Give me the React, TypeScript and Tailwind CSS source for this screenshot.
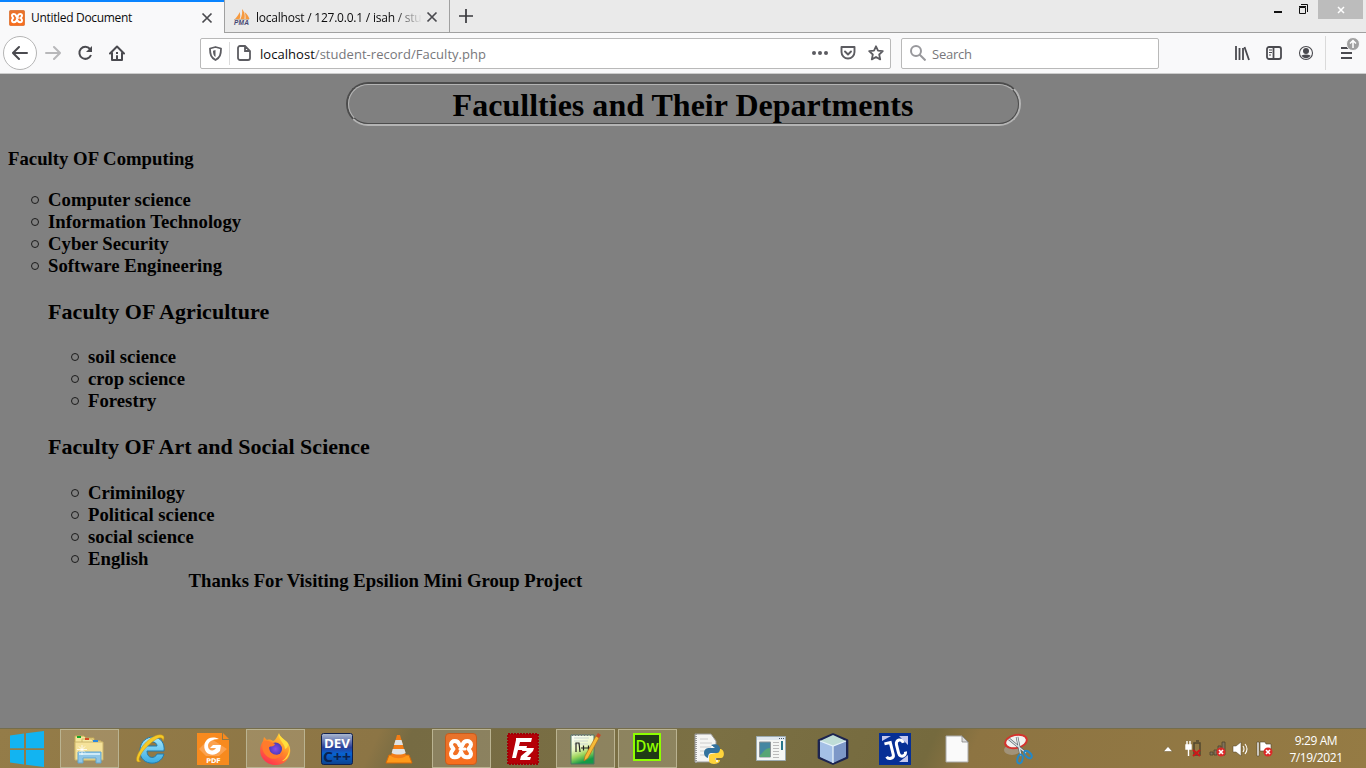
import React from "react";

type P = { children?: React.ReactNode };

const Cell = ({ children, active = false }: P & { active?: boolean }) => (
  <div className="flex h-[40px] w-[62px] shrink-0 items-center justify-center">
    <div
      className={
        active
          ? "flex h-[39px] w-[59px] items-center justify-center border border-[#bab391] bg-white/15"
          : "flex h-[39px] w-[59px] items-center justify-center"
      }
    >
      {children}
    </div>
  </div>
);

const Xampp = ({ size }: { size: number }) => (
  <svg width={size} height={size} viewBox="0 0 32 32">
    <defs>
      <linearGradient id="xa" x1="0" y1="0" x2="0" y2="1">
        <stop offset="0" stopColor="#e8732c" />
        <stop offset="1" stopColor="#f96d1c" />
      </linearGradient>
    </defs>
    <rect x="0.5" y="0.5" width="31" height="31" rx="3.5" fill="url(#xa)" stroke="#c65c1d" />
    <g fill="none" stroke="#fff" strokeWidth="4" strokeLinecap="round" strokeLinejoin="round">
      <path d="M14.500 12C13 6.500 6 7 6 11.500c0 2 1.500 3 2.500 4.500-1 1.500-2.500 2.500-2.500 4.500 0 5 7 5 9 .5l1-2" />
      <path d="M17.500 12C19 6.500 26 7 26 11.500c0 2-1.500 3-2.500 4.500 1 1.500 2.500 2.500 2.500 4.500 0 5-7 5-9 .5l-1-2" />
      <path d="M14.500 12.500L16 14l1.500-1.500M15 16h5" strokeWidth="3.200" />
    </g>
  </svg>
);

const Close = () => (
  <svg width="12" height="12" viewBox="0 0 12 12">
    <path d="M1.500 1.500l9 9M10.500 1.500l-9 9" stroke="#4a4a4f" strokeWidth="1.700" />
  </svg>
);

const Pma = () => (
  <svg width="18" height="16" viewBox="0 0 18 16">
    <path d="M2 10C4 8 6 5 6.500 3c1 3 1 5 0 7zM7.500 10C9 7 9.500 3 9 0c3 3 3 7 2.500 10zM12.500 10c0-3 0-5-1-7 3 2 4 5 5 7z" fill="#f79a3e" />
    <path d="M1 10.500h15" stroke="#c9b9a5" strokeWidth="1" />
    <text x="1" y="16" fontSize="6.500" fontWeight="bold" fontStyle="italic" fontFamily="Liberation Sans" fill="#454772" textLength="15">PMA</text>
  </svg>
);

const Explorer = () => (
  <svg width="32" height="30" viewBox="0 0 32 30">
    <path d="M2 2h9l2 2h8v20H2z" fill="#f5e59b" stroke="#c5aa56" />
    <path d="M4 2h4v2H4z" fill="#16a52a" />
    <path d="M9 5h10l1 2h8v19H9z" fill="#f7e9a4" stroke="#d0b765" />
    <path d="M12 4h4v2h-4z" fill="#d64c25" />
    <path d="M2 8h28v18H2z" fill="#f5e29a" stroke="#cbb46a" />
    <path d="M20 6h5v2h-5z" fill="#2b88dc" />
    <path d="M5 29V18h23v11h-5v-5H10v5z" fill="#8fc6e6" stroke="#62a5ce" />
    <path d="M6 19h21v2H6z" fill="#cdeaf8" />
    <path d="M9 11v10M4 15.500h10M6 12.500l6 6M12 12.500l-6 6" stroke="#fff" strokeWidth=".8" />
  </svg>
);

const IE = () => (
  <svg width="32" height="32" viewBox="0 0 32 32">
    <defs><linearGradient id="ie" x1="0" y1="0" x2="0" y2="1"><stop offset="0" stopColor="#a5e8ff" /><stop offset="1" stopColor="#3aabe2" /></linearGradient></defs>
    <path d="M29 18H12c0 8 8 8 10 3h7c-2 7-8 10-14 9C8 29 4 23 5 16 6 8 12 4 18 4c8 0 12 7 11 14zM12 13h10c0-5-9-6-10 0z" fill="url(#ie)" stroke="#217bae" />
    <path d="M6 28c-5 3-6-2-2-9C9 9 20 0 27 2c3 1 2 4 1 6 0-4-4-4-8-1C12 12 5 21 4 26c0 2 1 2 2 2z" fill="#f5ca26" stroke="#c28e16" strokeWidth=".5" />
  </svg>
);

const Foxit = () => (
  <svg width="32" height="32" viewBox="0 0 32 32">
    <path d="M0 0h25v7h7v25H0z" fill="#f78a1e" />
    <path d="M26 0l6 6h-6z" fill="#f78a1e" />
    <path d="M2 16L13 5l17 11-8 7H9z" fill="#fba14e" />
    <path d="M22 6C12 1 5 9 8 17c2 6 11 6 15 1l1-6h-8l-3 3h6c-2 4-8 3-8-2 0-4 4-7 11-7z" fill="#fff" />
    <text x="16.500" y="29.500" fontSize="6.500" textAnchor="middle" fontWeight="bold" fontFamily="DejaVu Sans" fill="#fff">PDF</text>
  </svg>
);

const Firefox = () => (
  <svg width="32" height="32" viewBox="0 0 32 32">
    <defs>
      <linearGradient id="fx" x1=".8" y1="0" x2=".2" y2="1"><stop stopColor="#ffe13b" /><stop offset=".45" stopColor="#ff8b28" /><stop offset="1" stopColor="#ff2855" /></linearGradient>
      <radialGradient id="fp"><stop stopColor="#8a4de8" /><stop offset="1" stopColor="#493bb7" /></radialGradient>
    </defs>
    <path d="M20 0c1 4 5 6 8 9 5 6 4 14-1 19-6 6-17 5-22-1C0 22 0 14 4 8l1-4 3 3c2-1 5 0 6 1 2 0 4-4 6-8z" fill="url(#fx)" />
    <circle cx="16.500" cy="16" r="6.500" fill="url(#fp)" />
    <path d="M5 8c4-1 7 1 11 3-1 3-4 2-6 3 0 8 9 10 14 5-1 6-9 9-15 5C3 20 2 13 5 8z" fill="#ff7b2c" />
    <path d="M20 1c-1 6 6 9 6 15 3-1 3-4 3-5 3 7-1 14-6 17 8-1 10-13 5-19-3-3-7-5-8-8z" fill="#ffdf3d" />
  </svg>
);

const Dev = () => (
  <svg width="32" height="32" viewBox="0 0 32 32">
    <defs><linearGradient id="dv" x1="0" y1="0" x2="0" y2="1"><stop stopColor="#aebbd1" /><stop offset=".45" stopColor="#2a3f98" /><stop offset=".65" stopColor="#0763d2" /><stop offset="1" stopColor="#0c418e" /></linearGradient></defs>
    <rect x=".5" y=".5" width="31" height="31" rx="2" fill="url(#dv)" stroke="#10204d" />
    <text x="3" y="14.500" fontSize="13" fontWeight="bold" fontFamily="Open Sans" textLength="26" lengthAdjust="spacingAndGlyphs" fill="#fff">DEV</text>
    <text x="2" y="29" fontSize="14" fontWeight="bold" fontFamily="Open Sans" textLength="28" lengthAdjust="spacingAndGlyphs" fill="#0b2250">C++</text>
  </svg>
);

const Vlc = () => (
  <svg width="28" height="30" viewBox="0 0 28 30">
    <path d="M4 21h20l3 8H1z" fill="#ff9a1b" stroke="#d96a08" />
    <path d="M12 1h3l6 21c-4 3-11 3-15 0z" fill="#f37d16" />
    <path d="M10.500 6h6l1.500 5H9zM7.700 15h11.700l1.300 4c-4 2-10 2-14 0z" fill="#dfe3e6" />
  </svg>
);

const Fz = () => (
  <svg width="32" height="32" viewBox="0 0 32 32">
    <rect x="1" y="1" width="30" height="30" fill="#b50007" stroke="#a00006" strokeWidth="2" strokeDasharray="2 1" />
    <path d="M9 5h16l-1 4H13l-1 4h8l-1 4h-8l-2 8H5l4-18zM16 15h11l-1 3-6 6h4l-1 3H13l1-4 6-5h-5z" fill="#fff" />
  </svg>
);

const Npp = () => (
  <svg width="32" height="32" viewBox="0 0 32 32">
    <defs><linearGradient id="np" x1="0" y1="0" x2=".3" y2="1"><stop stopColor="#fff" /><stop offset=".5" stopColor="#eaf6c5" /><stop offset=".75" stopColor="#9fd65c" /><stop offset="1" stopColor="#149a48" /></linearGradient></defs>
    <path d="M2 2h23v29H2z" fill="url(#np)" stroke="#4f7564" />
    <path d="M3 2h21" stroke="#777" strokeDasharray="1 2" strokeWidth="2" />
    <path d="M5 5h15M5 8h14M5 11h14" stroke="#cad8cf" />
    <path d="M7 19v-9h3l1 9M12 15h5M14.500 12.500v5M17 15h5M19.500 12.500v5" fill="none" stroke="#222" strokeWidth="1.200" />
    <path d="M27 3l3 2-11 20-4 3 1-5z" fill="#f6bb37" stroke="#b16e1a" strokeWidth=".7" />
    <path d="M27 3l2-3 3 2-2 3z" fill="#c64c2b" />
  </svg>
);

const Py = () => (
  <svg width="31" height="32" viewBox="0 0 31 32">
    <path d="M1 1h16l5 7v21H1z" fill="#f5f5f3" stroke="#999" />
    <path d="M2 1v29" stroke="#999" strokeWidth="2" strokeDasharray="1 1" />
    <path d="M6 6h8M6 10h12M6 14h12M6 18h12M6 22h8" stroke="#ccc" />
    <path d="M17 12c5-2 9 0 9 4v4h-9c-3 0-3 5-3 5s-4-1-4-5 3-5 5-5h6z" fill="#33729d" />
    <path d="M26 16c5 0 5 9 1 9h-6v2h5c0 5-11 5-11 1v-4c0-4 3-3 8-4 3 0 3-4 3-4z" fill="#ffd43b" />
    <circle cx="18" cy="14" r="1" fill="#fff" /><circle cx="23" cy="28" r="1" fill="#fff" />
  </svg>
);

const AppWindow = () => (
  <svg width="30" height="26" viewBox="0 0 30 26">
    <path d="M.5.5h29v24H.5z" fill="#f4f6f4" stroke="#9baab1" />
    <path d="M1 1h28v3H1z" fill="#dfe7ee" /><path d="M23 2.500h5" stroke="#456" strokeDasharray="1 1" />
    <path d="M3.500 6h11v15h-11z" fill="#4587a1" stroke="#8a9296" /><path d="M4 19c3-2 5-7 10-7v9H4z" fill="#57a675" />
    <path d="M17 6.500h6M17 9.500h6M17 12.500h6M17 15.500h6M17 18.500h6M17 21.500h6" stroke="#bbb" />
    <path d="M25 5h2v9h-2z" fill="#26758b" />
  </svg>
);

const Cube = () => (
  <svg width="32" height="32" viewBox="0 0 32 32">
    <path d="M16 1.500l14 6v17l-14 6-14-6v-17z" fill="#bad7ee" stroke="#1c2450" strokeWidth="2.700" strokeLinejoin="round" />
    <path d="M3 8l13-6 13 6-13 5z" fill="#bfddd7" /><path d="M3 8l13 5v17L3 24z" fill="#a4c0e6" /><path d="M16 13l13-5v16l-13 6z" fill="#7d98c8" />
    <path d="M3 8l13 5 13-5M16 13v17" stroke="#e6f3fa" strokeWidth="1.300" fill="none" />
  </svg>
);

const JC = () => (
  <svg width="32" height="32" viewBox="0 0 32 32">
    <path d="M0 0h32v32H0z" fill="#062f96" />
    <path d="M3 3h9L3 8zM20 3h9v9zM29 22v7h-9z" fill="#c4c7ee" />
    <g fill="none" stroke="#fff" strokeWidth="3" transform="rotate(-14 16 16)">
      <path d="M7 8.500h6V21c0 4-6 4-7 .5" />
      <path d="M25.500 12c0-5-7-5-7 0v9c0 5 7 5 7 0" />
    </g>
  </svg>
);

const Scissors = () => (
  <svg width="32" height="32" viewBox="0 0 32 32">
    <ellipse cx="9" cy="17" rx="8" ry="5" fill="#aaa093" opacity=".7" />
    <ellipse cx="13" cy="8.500" rx="11" ry="6.500" transform="rotate(-12 13 8.500)" fill="#f2f2f0" stroke="#d5322d" strokeWidth="2" />
    <path d="M6 6l17 14M14 4l4 19" stroke="#59636a" strokeWidth="2.600" /><path d="M6 6l17 14M14 4l4 19" stroke="#dde4e7" strokeWidth="1.300" />
    <ellipse cx="17" cy="26" rx="2.500" ry="4.500" transform="rotate(15 17 26)" fill="none" stroke="#2588c6" strokeWidth="2" />
    <ellipse cx="25" cy="21.500" rx="2.500" ry="4.500" transform="rotate(-45 25 21.500)" fill="none" stroke="#2588c6" strokeWidth="2" />
  </svg>
);

const Tabs = () => (
  <div className="flex h-[33px] bg-[#eaeaea] text-[12px] text-[#0c0c0d]">
    <div className="flex w-[224px] items-center border-t-2 border-[#0a84ff] bg-[#f9f9fa] pl-[9px] pr-[11px]">
      <Xampp size={16} />
      <span className="ml-[6px] flex-1 whitespace-nowrap tracking-[-0.32px]">Untitled Document</span>
      <Close />
    </div>
    <div className="flex w-[226px] items-center border-x border-b border-[#a0a0a0] pl-[8px] pr-[11px] pt-[2px]">
      <Pma />
      <span className="ml-[5px] mt-px w-[165px] overflow-hidden whitespace-nowrap tracking-[-0.22px] [mask-image:linear-gradient(to_right,black_138px,transparent_166px)]">localhost / 127.0.0.1 / isah / stude</span>
      <span className="ml-[5px] shrink-0"><Close /></span>
    </div>
    <div className="flex flex-1 border-b border-[#a0a0a0]">
      <svg className="ml-[8px] mt-[8px]" width="16" height="16"><path d="M8 1v14M1 8h14" stroke="#38383d" strokeWidth="1.700" /></svg>
      <div className="ml-auto mr-[3px] flex">
        <svg className="mr-[7px] mt-[3px]" width="38" height="14"><path d="M1 9h8" stroke="#111" strokeWidth="2" /><path d="M26.500 4.500h6v6h-6zM26 3.500h7M28 1.500h6.500V9" fill="none" stroke="#111" /></svg>
        <div className="flex h-[19px] w-[45px] items-center justify-center bg-[#bcbcbc]"><svg width="8" height="8"><path d="M1 1l6 6M7 1L1 7" stroke="#fff" strokeWidth="1.500" /></svg></div>
      </div>
    </div>
  </div>
);

const Toolbar = () => (
  <div className="flex h-[41px] items-center border-b border-[#cccccc] bg-[#f9f9fa] pl-[3px] text-[13px]">
    <div className="flex h-[34px] w-[34px] items-center justify-center rounded-full border border-[#b5b5b5] bg-white">
      <svg width="16" height="16" fill="none" stroke="#4a4a4f" strokeWidth="2" strokeLinecap="round"><path d="M15 8H1M7 2L1 8l6 6" /></svg>
    </div>
    <svg className="ml-[8px]" width="16" height="16" fill="none" stroke="#b8b8ba" strokeWidth="2" strokeLinecap="round"><path d="M1 8h14M9 2l6 6-6 6" /></svg>
    <svg className="ml-[16px]" width="16" height="16" fill="none" stroke="#4a4a4f" strokeWidth="2"><path d="M13 4a6 6 0 1 0 1 6" /><path d="M15 1v6H9z" fill="#4a4a4f" stroke="none" /></svg>
    <svg className="ml-[16px]" width="16" height="16" fill="none" stroke="#4a4a4f" strokeWidth="2" strokeLinejoin="round"><path d="M1 8.500L8 1.500l7 7M3 8v7h10V8M8 15v-4" strokeLinecap="round" /><path d="M7 7h2v2H7z" fill="#4a4a4f" stroke="none" /></svg>
    <div className="ml-[75px] flex h-[31px] w-[691px] items-center rounded-[2px] border border-[#b9b9b9] bg-white pl-[8px] pr-[6px]">
      <svg width="13" height="15" viewBox="0 0 13 15"><path d="M6.500 1L12 2.500c0 6-1 9-5.500 11.500C2 11.500 1 8.500 1 2.500z" fill="none" stroke="#5c5c61" strokeWidth="1.800" strokeLinejoin="round" /><path d="M6.500 4L4 4.700c0 3 .5 5 2.500 6.300z" fill="#5c5c61" /></svg>
      <div className="ml-[7px] h-[23px] w-px bg-[#dcdcdc]" />
      <svg className="ml-[7px]" width="14" height="16"><path d="M3 1h5l5 5v7a2 2 0 0 1-2 2H3a2 2 0 0 1-2-2V3a2 2 0 0 1 2-2zM8 1v5h5" fill="none" stroke="#5c5c61" strokeWidth="1.800" /></svg>
      <span className="ml-[9px] mt-[3px] whitespace-nowrap tracking-[0.04px] text-[#77777b]"><span className="text-[#0c0c0d]">localhost</span>/student-record/Faculty.php</span>
      <svg className="ml-auto" width="16" height="16" fill="#5c5c61"><circle cx="2" cy="8" r="2" /><circle cx="8" cy="8" r="2" /><circle cx="14" cy="8" r="2" /></svg>
      <svg className="ml-[12px]" width="16" height="16" fill="none" stroke="#5c5c61" strokeWidth="1.900" strokeLinejoin="round" strokeLinecap="round"><path d="M1.500 2h13v5a6.500 6.500 0 0 1-13 0zM5 6.500l3 3 3-3" /></svg>
      <svg className="ml-[12px]" width="16" height="16" fill="none" stroke="#5c5c61" strokeWidth="1.800" strokeLinejoin="round"><path d="M8 1.300l2 4.400 4.800.5-3.600 3.300 1 4.900L8 12l-4.200 2.400 1-4.900-3.600-3.300L6 5.700z" /></svg>
    </div>
    <div className="ml-[10px] flex h-[31px] w-[258px] items-center rounded-[2px] border border-[#b9b9b9] bg-white pl-[8px]">
      <svg width="16" height="16" fill="none" stroke="#98989c" strokeWidth="2"><circle cx="6" cy="6" r="5" /><path d="M9.500 9.500l6 6" /></svg>
      <span className="ml-[6px] mt-[3px] tracking-[-0.25px] text-[#77777b]">Search</span>
    </div>
    <svg className="ml-[75px]" width="16" height="16" stroke="#4a4a4f" strokeWidth="1.800"><path d="M2 1v14M5.500 3v12M9 3v12M10.500 2l4.500 13" /></svg>
    <svg className="ml-[16px]" width="16" height="16" fill="none" stroke="#4a4a4f" strokeWidth="1.800"><rect x="1" y="2" width="14" height="12" rx="2" /><path d="M7.500 2v12" /><path d="M3 5h3M3 7.500h3M3 10h2" strokeWidth="1" /></svg>
    <svg className="ml-[16px]" width="16" height="16"><circle cx="8" cy="8" r="6.500" fill="none" stroke="#4a4a4f" strokeWidth="1.100" /><circle cx="8" cy="6" r="3" fill="#4a4a4f" /><path d="M3.500 10.500c3-1.500 6-1.500 9 0-2 3.500-7 3.500-9 0z" fill="#4a4a4f" /></svg>
    <div className="ml-[11px] h-[34px] w-px bg-[#dadada]" />
    <svg className="ml-[13px] mt-[-10px]" width="22" height="26"><path d="M2 13h11M2 18h11M2 23h11" stroke="#4a4a4f" strokeWidth="2" /><circle cx="14" cy="9" r="6.500" fill="#a0a0a0" stroke="#f9f9fa" /><path d="M14 13V6M11 8.500L14 5.500l3 3" fill="none" stroke="#fff" strokeWidth="1.500" /></svg>
  </div>
);

const DeptList = ({ items }: { items: string[] }) => (
  <ul className="pl-[40px]">
    {items.map((s) => (
      <li key={s} className="relative h-[22px] leading-[22px]">
        <span className="absolute left-[-17px] top-[7px] h-[8px] w-[8px] rounded-full border border-[#1c1c1c]" />
        {s}
      </li>
    ))}
  </ul>
);

const Page = () => (
  <main className="flex-1 bg-[#808080] px-[8px] pt-[8px] font-['Liberation_Serif',serif] text-[18.72px] font-bold tracking-[0.02px] text-black">
    <div className="mx-auto h-[44px] w-[675px] rounded-[22px] border-2 border-b-[#b4b4b4] border-l-[#4c4c4c] border-r-[#b4b4b4] border-t-[#4c4c4c]">
      <h1 className="h-full rounded-[20px] border border-b-[#4c4c4c] border-l-[#b4b4b4] border-r-[#4c4c4c] border-t-[#b4b4b4] text-center text-[32px] leading-[40px]">Facullties and Their Departments</h1>
    </div>
    <h3 className="mt-[22px] leading-[22px]">Faculty OF Computing</h3>
    <div className="mt-[19px]"><DeptList items={["Computer science", "Information Technology", "Cyber Security", "Software Engineering"]} /></div>
    <div className="pl-[40px]">
      <h3 className="mt-[22px] text-[22px] leading-[26px] tracking-[0.06px]">Faculty OF Agriculture</h3>
      <div className="mt-[21px]"><DeptList items={["soil science", "crop science", "Forestry"]} /></div>
      <h3 className="mt-[22px] text-[22px] leading-[26px] tracking-[0.02px]">Faculty OF Art and Social Science</h3>
      <div className="mt-[22px]"><DeptList items={["Criminilogy", "Political science", "social science", "English"]} /></div>
      <p className="ml-[140.5px] leading-[22px]">Thanks For Visiting Epsilion Mini Group Project</p>
    </div>
  </main>
);

const Taskbar = () => (
  <footer className="flex h-[40px] items-center border-t border-[#756d4b] bg-[linear-gradient(115deg,#947c48_0px,#8c7545_345px,#766b43_375px,#7b7044_650px,#756a3e_850px,#8d7442_890px,#957b44_100%)] text-white">
    <div className="flex w-[58px] justify-center pr-[4px]">
      <svg width="34" height="36" viewBox="0 0 34 36" fill="#12b4f1"><path d="M0 4.500l14-2v14.700H0zM16 2.200L34 0v17.200H16zM0 19h14v14.500l-14-2zM16 19h18v17l-18-2.200z" /></svg>
    </div>
    <Cell active><Explorer /></Cell>
    <Cell><IE /></Cell>
    <Cell><Foxit /></Cell>
    <Cell active><Firefox /></Cell>
    <Cell><Dev /></Cell>
    <Cell><Vlc /></Cell>
    <Cell active><Xampp size={32} /></Cell>
    <Cell><Fz /></Cell>
    <Cell active><Npp /></Cell>
    <Cell active>
      <svg className="mt-[-4px]" width="28" height="28"><rect x="1" y="1" width="26" height="26" fill="#203b16" stroke="#8eff00" strokeWidth="2" /><text x="2.500" y="19" fontSize="16" fontWeight="600" fontFamily="Open Sans" fill="#91ff00" textLength="23" lengthAdjust="spacingAndGlyphs">Dw</text></svg>
    </Cell>
    <Cell><Py /></Cell>
    <Cell><AppWindow /></Cell>
    <Cell><Cube /></Cell>
    <Cell><JC /></Cell>
    <Cell><svg width="24" height="28"><path d="M1 1h16l6 6v20H1z" fill="#fafafa" stroke="#aaa" /><path d="M17 1v6h6z" fill="#ddd" stroke="#777" strokeWidth=".7" /></svg></Cell>
    <Cell><Scissors /></Cell>
    <svg className="ml-[113px] shrink-0" width="10" height="6"><path d="M.5 5.500l4.500-5 4.500 5z" fill="#fff" stroke="#66552d" strokeWidth=".5" /></svg>
    <svg className="ml-[12px] shrink-0" width="17" height="18"><path d="M2 1v4M5 1v4M1 5h5v4H1zM3.500 9v7" fill="#fff" stroke="#fff" strokeWidth="1.400" /><path d="M9 3h6v12H9zM11 1h3" fill="none" stroke="#51472f" strokeWidth="1.500" /><path d="M8 10l7 6M15 10l-7 6" stroke="#ce1719" strokeWidth="2" /></svg>
    <svg className="ml-[7px] shrink-0" width="18" height="18"><path d="M1 12h3v3H1zM5 10h3v5H5zM9 6h3v9H9zM13 2h3v13h-3z" fill="#80725a" stroke="#4d432c" strokeWidth=".8" /><circle cx="12" cy="12" r="4.500" fill="#dc2928" /><path d="M10 10l4 4M14 10l-4 4" stroke="#fff" strokeWidth="1.600" /></svg>
    <svg className="ml-[5px] shrink-0" width="17" height="16"><path d="M1 5h3l5-4v14l-5-4H1z" fill="#fff" stroke="#4d432c" strokeWidth=".5" /><path d="M11 5q2 3 0 6M13 3q4 5 0 10" fill="none" stroke="#fff" strokeWidth="1.100" /></svg>
    <svg className="ml-[7px] shrink-0" width="18" height="18"><path d="M1 2h2v14H1zM4 2h5l1 2h5v7H4z" fill="#fff" stroke="#4d432c" strokeWidth=".6" /><circle cx="12" cy="12" r="4.500" fill="#dc2928" /><path d="M10 10l4 4M14 10l-4 4" stroke="#fff" strokeWidth="1.600" /></svg>
    <div className="ml-[12px] w-[60px] shrink-0 whitespace-nowrap text-center text-[12px] leading-[17px] tracking-[-0.4px]"><div>9:29 AM</div><div>7/19/2021</div></div>
  </footer>
);

export default function App() {
  return (
    <div className="flex h-[768px] w-[1366px] flex-col overflow-hidden font-['Open_Sans','Noto_Sans',sans-serif]">
      <Tabs />
      <Toolbar />
      <Page />
      <Taskbar />
    </div>
  );
}
